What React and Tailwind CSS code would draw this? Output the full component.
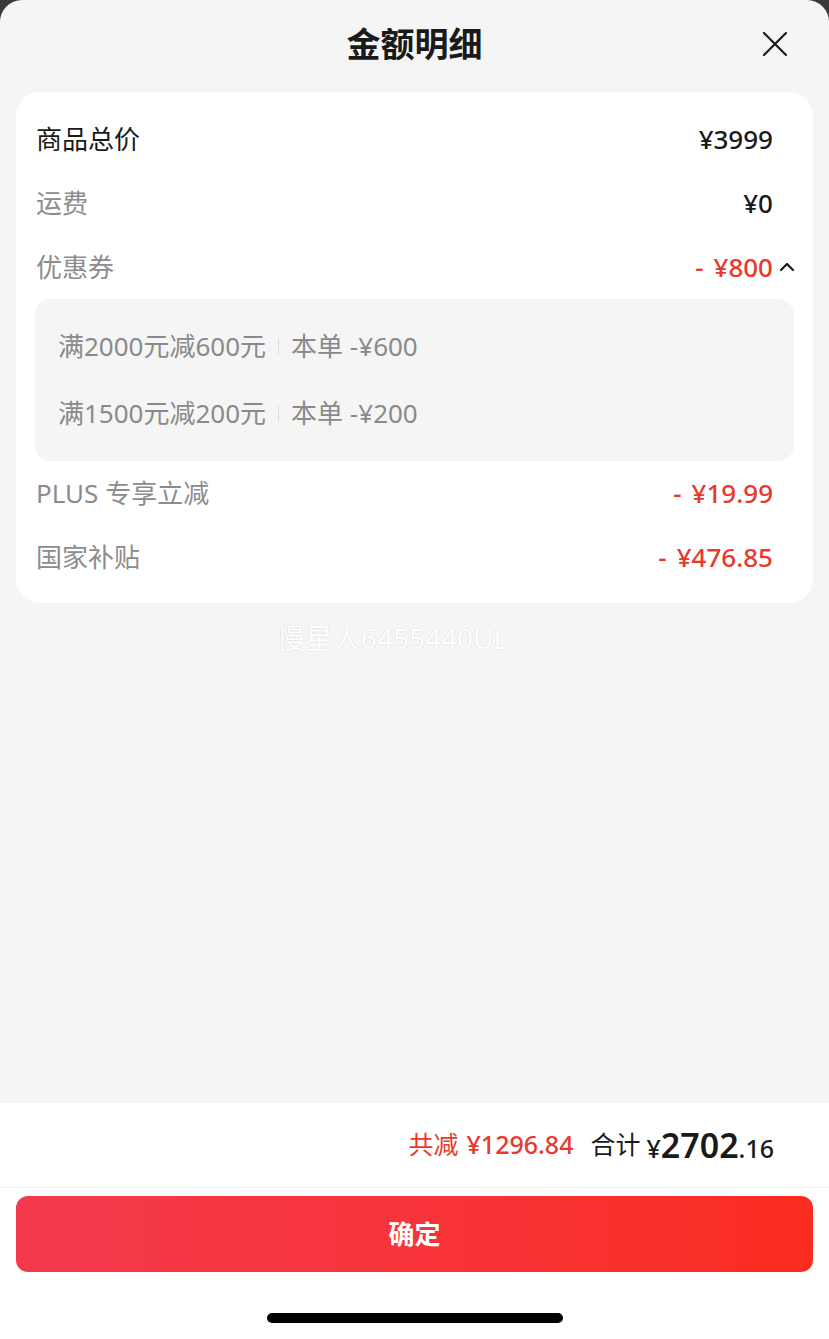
import React from "react";

const FONT = { fontFamily: '"Noto Sans", "Noto Sans CJK SC", sans-serif' };

function Row({ label, value, labelClass, valueClass }) {
  return (
    <div className="flex h-[64px] items-center justify-between">
      <span className={`text-[26px] ${labelClass}`}>{label}</span>
      <span className={`flex items-center text-[26px] font-medium ${valueClass}`}>{value}</span>
    </div>
  );
}

function Coupon({ cond, amt }) {
  return (
    <div className="flex h-[67px] items-center text-[26px] text-[#8a8a8a]">
      <span>{cond}</span>
      <span className="mx-[12px] h-[16px] w-px bg-[#dcdcdc]" />
      <span>本单 -¥{amt}</span>
    </div>
  );
}

function Neg({ v }) {
  return (
    <span className="text-[#e8392b]">
      <span className="mr-[10px]">-</span>¥{v}
    </span>
  );
}

export default function App() {
  return (
    <div className="h-[1339px] w-[829px] bg-[#3a3a3a]" style={FONT}>
      <div className="flex h-full flex-col overflow-hidden rounded-t-[22px] bg-[#f5f5f5]">
        <div className="relative flex h-[88px] items-center justify-center">
          <span className="text-[34px] font-bold text-[#1a1a1a]">金额明细</span>
          <button className="absolute right-[40px] top-[30px] flex h-[28px] w-[28px] items-center justify-center">
            <svg width="26" height="26" viewBox="0 0 26 26" fill="none" stroke="#1a1a1a" strokeWidth="2.2" strokeLinecap="round">
              <path d="M2 2 L24 24 M24 2 L2 24" />
            </svg>
          </button>
        </div>

        <div className="mx-[16px] mt-[4px] rounded-[24px] bg-white pl-[20px] pr-[40px] pt-[15px] pb-[14px]">
          <Row label="商品总价" value="¥3999" labelClass="text-[#1a1a1a]" valueClass="text-[#1a1a1a]" />
          <Row label="运费" value="¥0" labelClass="text-[#8c8c8c]" valueClass="text-[#1a1a1a]" />
          <div className="relative">
            <Row label="优惠券" value={<Neg v="800" />} labelClass="text-[#8c8c8c]" valueClass="" />
            <svg className="absolute right-[-22px] top-[26px]" width="16" height="12" viewBox="0 0 16 12" fill="none" stroke="#1a1a1a" strokeWidth="2.2" strokeLinecap="round" strokeLinejoin="round">
              <path d="M2 9 L8 3 L14 9" />
            </svg>
          </div>
          <div className="-mr-[21px] -ml-[1px] rounded-[16px] bg-[#f5f5f5] px-[23px] py-[14px]">
            <Coupon cond="满2000元减600元" amt="600" />
            <Coupon cond="满1500元减200元" amt="200" />
          </div>
          <Row label="PLUS 专享立减" value={<Neg v="19.99" />} labelClass="text-[#8c8c8c]" valueClass="" />
          <Row label="国家补贴" value={<Neg v="476.85" />} labelClass="text-[#8c8c8c]" valueClass="" />
        </div>

        <div className="mt-[14px] flex justify-center">
          <span
            className="ml-[-44px] text-[28px] text-white"
            style={{ textShadow: "0 0 1px rgba(0,0,0,0.12), 0 0 2px rgba(0,0,0,0.06)" }}
          >
            慢星人6455440UL
          </span>
        </div>

        <div className="flex-1" />

        <div className="flex h-[236px] flex-col bg-white">
          <div className="flex h-[85px] items-center justify-end border-b border-[#efefef] pr-[55px]">
            <span className="text-[25px] text-[#e8392b]">共减</span>
            <span className="ml-[8px] text-[25px] font-medium text-[#e8392b]">¥1296.84</span>
            <span className="ml-[17px] text-[25px] text-[#1a1a1a]">合计</span>
            <span className="ml-[6px] flex items-baseline text-[#1a1a1a]">
              <span className="text-[25px] font-medium">¥</span>
              <span className="text-[34px] font-semibold">2702</span>
              <span className="text-[25px] font-medium">.16</span>
            </span>
          </div>
          <div className="px-[16px] pt-[8px]">
            <button className="flex h-[76px] w-full items-center justify-center rounded-[12px] bg-gradient-to-r from-[#f43a4d] to-[#fa2c1e] text-[26px] font-bold text-white">
              确定
            </button>
          </div>
          <div className="mt-[41px] flex justify-center">
            <div className="h-[10px] w-[296px] rounded-full bg-black" />
          </div>
        </div>
      </div>
    </div>
  );
}
